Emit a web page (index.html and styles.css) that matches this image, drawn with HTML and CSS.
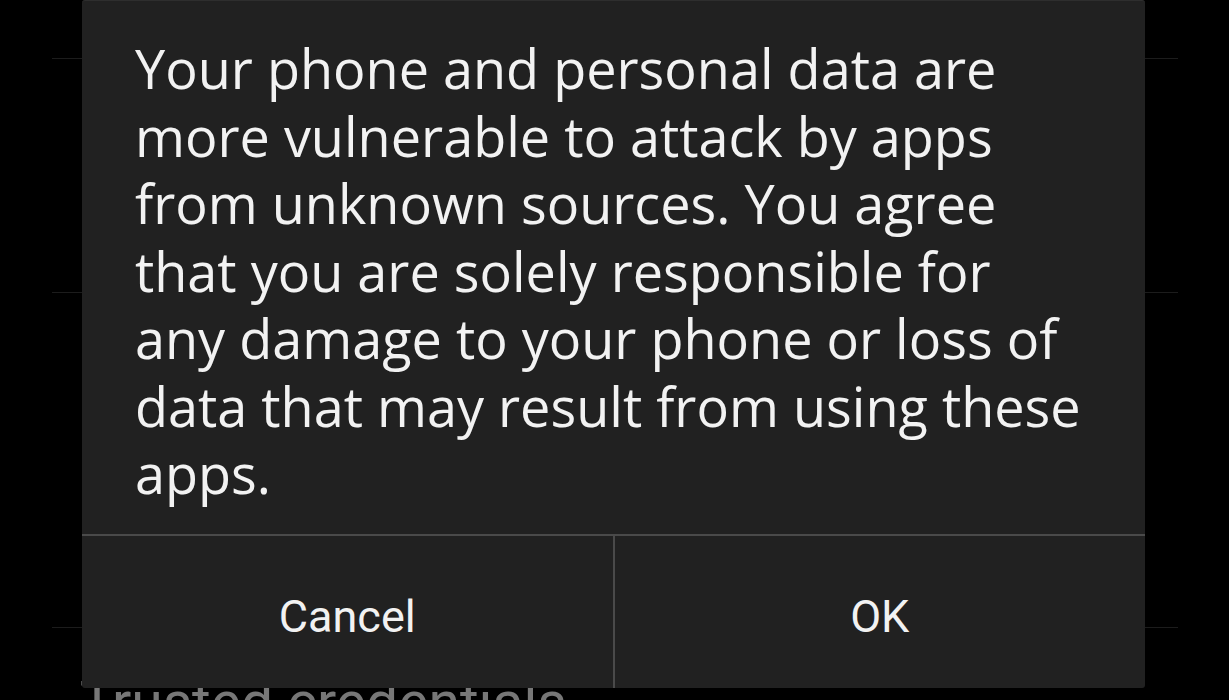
FILE: index.html
```html
<!DOCTYPE html>
<html>
<head>
<meta charset="utf-8">
<link rel="stylesheet" href="styles.css">
</head>
<body>
<div class="screen">
  <div class="list">
    <div class="row row-a"></div>
    <div class="row row-b"></div>
    <div class="row row-c"></div>
    <div class="row row-e">
      <div class="item-title">Trusted credentials</div>
    </div>
  </div>

  <div class="dialog">
    <div class="dialog-body">
      <p class="message">Your phone and personal data are more vulnerable to attack by apps from unknown sources. You agree that you are solely responsible for any damage to your phone or loss of data that may result from using these apps.</p>
    </div>
    <div class="dialog-buttons">
      <button class="btn">Cancel</button>
      <button class="btn">OK</button>
    </div>
  </div>
</div>
</body>
</html>
```

FILE: styles.css
```css
html, body {
  margin: 0;
  padding: 0;
  background: #000;
  width: 1229px;
  height: 700px;
  overflow: hidden;
}

.screen {
  position: relative;
  width: 1229px;
  height: 700px;
  overflow: hidden;
  font-family: "Open Sans", "DejaVu Sans", sans-serif;
}

.list {
  margin: 0 51px 0 52px;
  display: flex;
  flex-direction: column;
}

.row {
  border-bottom: 1px solid #1c1c1c;
  padding-left: 28px;
  box-sizing: border-box;
}

.row-a { height: 59px; }
.row-b { height: 234px; }
.row-c { height: 335px; }
.row-e { border-bottom: none; padding-top: 42px; }

.item-title {
  font-family: Roboto, "Open Sans", sans-serif;
  font-size: 57px;
  line-height: 66px;
  color: #777;
}

.dialog {
  position: absolute;
  left: 82px;
  top: 0;
  width: 1063px;
  height: 688px;
  background: #212121;
  border-top: 1px solid #2e2e2e;
  box-sizing: border-box;
  border-radius: 3px;
  display: flex;
  flex-direction: column;
}

.dialog-body {
  height: 533px;
  padding: 0 52px 0 53px;
  box-sizing: border-box;
}

.message {
  margin: 0;
  padding-top: 34px;
  font-family: "Open Sans", "DejaVu Sans", sans-serif;
  font-size: 54px;
  line-height: 67.5px;
  color: #f2f2f2;
}

.dialog-buttons {
  flex: 1;
  display: flex;
  border-top: 2px solid #4a4a4a;
}

.btn {
  flex: 1;
  background: transparent;
  border: none;
  margin: 0;
  padding: 8px 0 0 0;
  font-family: Roboto, "Open Sans", sans-serif;
  font-size: 45px;
  color: #f2f2f2;
}

.btn + .btn {
  border-left: 2px solid #4a4a4a;
}
```
